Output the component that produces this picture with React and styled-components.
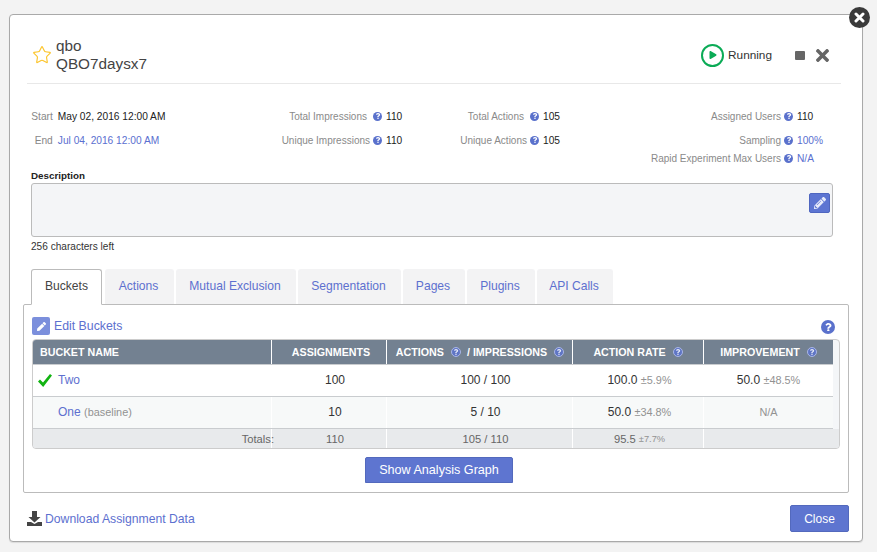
import styled, { createGlobalStyle } from "styled-components";
import { FaPen, FaPencilAlt, FaPlay, FaQuestion, FaTimes } from "react-icons/fa";
import { Star } from "lucide-react";

const GlobalStyle = createGlobalStyle`
  html, body {
    margin: 0;
    height: 552px;
    overflow: hidden;
    background: #f3f3f3;
    font-family: "Liberation Sans", Arial, sans-serif;
    color: #333;
  }
  * { box-sizing: border-box; }
`;

const Page = styled.div`
  width: 877px;
  height: 552px;
  padding: 14px 0 0 9px;
`;

const Modal = styled.div`
  position: relative;
  width: 854px;
  height: 528px;
  background: #fff;
  border: 1px solid #a9a9a9;
  border-radius: 4px;
  padding: 0 13px;
  box-shadow: 0 1px 1px rgba(0, 0, 0, 0.1);
`;

const Dismiss = styled.button`
  position: absolute;
  top: -8px;
  right: -8px;
  width: 21px;
  height: 21px;
  padding: 0;
  border: 0;
  border-radius: 50%;
  background: #3a3a3a;
  display: flex;
  align-items: center;
  justify-content: center;
`;

const Header = styled.div`
  display: flex;
  align-items: center;
  justify-content: space-between;
  height: 69px;
  margin: 0 8px 0 4px;
  padding: 12px 9px 0 5px;
  border-bottom: 1px solid #e8e8e8;
`;

const TitleGroup = styled.div`
  display: flex;
  align-items: center;
  gap: 4px;
  color: #fcc52d;
`;

const Title = styled.div`
  color: #444;
  font-size: 15.3px;
  line-height: 18px;
`;

const Controls = styled.div`
  display: flex;
  align-items: center;
  color: #666;
`;

const PlayRing = styled.span`
  width: 23px;
  height: 23px;
  border: 2px solid #0bab56;
  border-radius: 50%;
  color: #0bab56;
  font-size: 8px;
  display: flex;
  align-items: center;
  justify-content: center;
  padding-left: 1px;
  margin-right: 4px;
`;

const Status = styled.span`
  color: #333;
  font-size: 11.8px;
  margin-right: 23px;
`;

const StopButton = styled.span`
  width: 10px;
  height: 9px;
  background: #666;
  border-radius: 1px;
  margin-right: 8px;
`;

const Meta = styled.div`
  display: grid;
  grid-template-columns: 144px 253px 157px 247px;
  grid-template-rows: 24px 18px 18px;
  margin-top: 20px;
  font-size: 10.2px;
`;

const MetaCell = styled.div`
  display: flex;
  align-items: center;
  justify-content: flex-end;
  height: 24px;
  grid-column: ${(p) => p.$col};
  grid-row: ${(p) => p.$row};
`;

const DateCell = styled(MetaCell)`
  justify-content: flex-start;
`;

const DateLabel = styled.span`
  color: #888;
  width: 30px;
  margin-right: 5px;
  text-align: right;
`;

const MetaLabel = styled.span`
  color: #8a8a8a;
  font-size: 10px;
  margin-right: ${(p) => p.$gap || 3}px;
`;

const MetaValue = styled.span`
  color: ${(p) => (p.$link ? "#5a6fd0" : "#222")};
  width: ${(p) => p.$w || 34}px;
  white-space: nowrap;
  margin-left: ${(p) => (p.$flush ? 0 : 4)}px;
`;

const HelpDot = styled.span`
  width: ${(p) => p.$size || 9}px;
  height: ${(p) => p.$size || 9}px;
  margin-top: ${(p) => (p.$size ? 2 : 0)}px;
  border-radius: 50%;
  background: #5a71cc;
  color: #fff;
  font-size: ${(p) => (p.$size ? p.$size * 0.62 : 6)}px;
  display: inline-flex;
  align-items: center;
  justify-content: center;
  flex: none;
`;

const HelpRing = styled.span`
  width: 10px;
  height: 10px;
  border-radius: 50%;
  border: 1px solid #a9b6e6;
  background: #5f75c4;
  color: #e4e8f7;
  font-size: 6px;
  display: inline-flex;
  align-items: center;
  justify-content: center;
  margin: 0 ${(p) => (p.$mid ? 6 : 0)}px 0 7px;
`;

const Section = styled.div`
  margin: 0 16px 0 8px;
`;

const FieldLabel = styled.div`
  color: #222;
  font-size: 9.8px;
  font-weight: bold;
  line-height: 12px;
  margin-top: 6px;
`;

const DescriptionBox = styled.div`
  position: relative;
  height: 54px;
  margin-top: 1px;
  background: #f4f5f7;
  border: 1px solid #bbb;
  border-radius: 3px;
`;

const EditButton = styled.span`
  position: absolute;
  top: 9px;
  right: 2px;
  width: 21px;
  height: 20px;
  background: #5d75d2;
  border: 1px solid #4f66c0;
  border-radius: 2px;
  color: #e8ecfb;
  font-size: 12px;
  display: flex;
  align-items: center;
  justify-content: center;
`;

const Counter = styled.div`
  font-size: 10.1px;
  line-height: 12px;
  margin-top: 4px;
  color: #333;
`;

const Tabs = styled.div`
  display: flex;
  gap: 2px;
  margin: 16px 0 -1px 8px;
  position: relative;
  z-index: 1;
`;

const Tab = styled.div`
  height: ${(p) => (p.$active ? 36 : 35)}px;
  width: ${(p) => p.$w}px;
  margin-right: ${(p) => (p.$active ? 1 : 0)}px;
  display: flex;
  align-items: center;
  justify-content: center;
  font-size: 12.1px;
  padding: 0 ${(p) => (p.$active ? 0 : 2)}px 3px 0;
  border-radius: 3px 3px 0 0;
  color: ${(p) => (p.$active ? "#444" : "#5d70cf")};
  background: ${(p) => (p.$active ? "#fff" : "#f3f3f4")};
  border: 1px solid ${(p) => (p.$active ? "#bbb" : "#f3f3f4")};
  border-bottom: ${(p) => (p.$active ? "1px solid #fff" : "0")};
`;

const Panel = styled.div`
  width: 826px;
  height: 189px;
  padding: 11px 8px 0;
  background: #fff;
  border: 1px solid #bbb;
  border-radius: 2px;
`;

const PanelBar = styled.div`
  display: flex;
  align-items: center;
  justify-content: space-between;
  height: 20px;
  margin-bottom: 3px;
  padding-right: 5px;
`;

const EditLink = styled.span`
  display: flex;
  align-items: center;
  gap: 4px;
  color: #5d70cf;
  font-size: 12.3px;
`;

const EditIcon = styled.span`
  width: 18px;
  height: 18px;
  border-radius: 2px;
  background: #7b8fdc;
  color: #fff;
  font-size: 9px;
  display: flex;
  align-items: center;
  justify-content: center;
`;

const TableBox = styled.div`
  width: 808px;
  height: 110px;
  background: #f4f6f8;
  border: 1px solid #ccc;
  border-radius: 4px;
  overflow: hidden;
`;

const Row = styled.div`
  display: grid;
  grid-template-columns: 239px 115px 186px 131px 129px;
  height: ${(p) => p.$h}px;
  width: ${(p) => (p.$fill ? "100%" : "800px")};
  background: ${(p) => p.$bg};
  border-bottom: ${(p) => (p.$line ? "1px solid #c9cccf" : "0")};
  font-size: ${(p) => p.$size || 12}px;
  color: ${(p) => p.$color || "#333"};
`;

const Cell = styled.div`
  display: flex;
  align-items: center;
  justify-content: ${(p) => p.$align || "center"};
  border-right: ${(p) => (p.$last ? "0" : "1px solid #fff")};
  white-space: pre;
  padding-left: ${(p) => p.$pad || 0}px;
  padding-bottom: 1px;
`;

const HeadCell = styled(Cell)`
  color: #fff;
  font-size: 10.7px;
  font-weight: bold;
`;

const BucketLink = styled.span`
  color: #5d70cf;
  font-size: 12px;
`;

const Muted = styled.span`
  color: #929292;
  font-size: ${(p) => p.$size || 10.9}px;
`;

const TotalsLabel = styled.span`
  margin-right: -3px;
`;

const Check = styled.svg`
  width: 14px;
  height: 13px;
  margin-right: 6px;
  fill: #12b312;
`;

const ButtonRow = styled.div`
  display: flex;
  justify-content: center;
  margin: 8px 0 0 6px;
`;

const Primary = styled.button`
  height: ${(p) => p.$h}px;
  width: ${(p) => p.$w}px;
  padding: 0;
  background: #5e75d0;
  border: 1px solid #5369bd;
  border-radius: ${(p) => (p.$flat ? "2px 2px 0 0" : "2px")};
  color: #fff;
  font-family: inherit;
  font-size: ${(p) => p.$size || 12}px;
`;

const Footer = styled.div`
  display: flex;
  align-items: center;
  justify-content: space-between;
  margin: 12px 0 0 4px;
`;

const DownloadLink = styled.span`
  display: flex;
  align-items: center;
  gap: 3px;
  color: #5d70cf;
  font-size: 12.2px;
`;

const helpIcon = (
  <HelpDot>
    <FaQuestion />
  </HelpDot>
);

const ring = (
  <HelpRing>
    <FaQuestion />
  </HelpRing>
);

function App() {
  return (
    <Page>
      <GlobalStyle />
      <Modal>
        <Dismiss>
          <svg width="11" height="11" viewBox="0 0 11 11">
            <path d="M2 2l7 7M9 2l-7 7" stroke="#fff" strokeWidth="3" strokeLinecap="round" />
          </svg>
        </Dismiss>
        <Header>
          <TitleGroup>
            <Star size={20} strokeWidth={1.4} />
            <Title>
              qbo
              <br />
              QBO7daysx7
            </Title>
          </TitleGroup>
          <Controls>
            <PlayRing>
              <FaPlay />
            </PlayRing>
            <Status>Running</Status>
            <StopButton />
            <FaTimes size={19} />
          </Controls>
        </Header>
        <Meta>
          <DateCell $col={1} $row={1}>
            <DateLabel>Start</DateLabel>
            <MetaValue $w={110} $flush>May 02, 2016 12:00 AM</MetaValue>
          </DateCell>
          <DateCell $col={1} $row={2}>
            <DateLabel>End</DateLabel>
            <MetaValue $w={110} $flush $link>Jul 04, 2016 12:00 AM</MetaValue>
          </DateCell>
          <MetaCell $col={2} $row={1}>
            <MetaLabel $gap={6}>Total Impressions</MetaLabel>
            {helpIcon}
            <MetaValue>110</MetaValue>
          </MetaCell>
          <MetaCell $col={2} $row={2}>
            <MetaLabel>Unique Impressions</MetaLabel>
            {helpIcon}
            <MetaValue>110</MetaValue>
          </MetaCell>
          <MetaCell $col={3} $row={1}>
            <MetaLabel $gap={6}>Total Actions</MetaLabel>
            {helpIcon}
            <MetaValue>105</MetaValue>
          </MetaCell>
          <MetaCell $col={3} $row={2}>
            <MetaLabel>Unique Actions</MetaLabel>
            {helpIcon}
            <MetaValue>105</MetaValue>
          </MetaCell>
          <MetaCell $col={4} $row={1}>
            <MetaLabel>Assigned Users</MetaLabel>
            {helpIcon}
            <MetaValue $w={27}>110</MetaValue>
          </MetaCell>
          <MetaCell $col={4} $row={2}>
            <MetaLabel>Sampling</MetaLabel>
            {helpIcon}
            <MetaValue $w={27} $link>100%</MetaValue>
          </MetaCell>
          <MetaCell $col={4} $row={3}>
            <MetaLabel>Rapid Experiment Max Users</MetaLabel>
            {helpIcon}
            <MetaValue $w={27} $link>N/A</MetaValue>
          </MetaCell>
        </Meta>
        <Section>
          <FieldLabel>Description</FieldLabel>
          <DescriptionBox>
            <EditButton>
              <FaPencilAlt />
            </EditButton>
          </DescriptionBox>
          <Counter>256 characters left</Counter>
        </Section>
        <Tabs>
          <Tab $active $w={71}>Buckets</Tab>
          <Tab $w={69}>Actions</Tab>
          <Tab $w={120}>Mutual Exclusion</Tab>
          <Tab $w={103}>Segmentation</Tab>
          <Tab $w={62}>Pages</Tab>
          <Tab $w={68}>Plugins</Tab>
          <Tab $w={76}>API Calls</Tab>
        </Tabs>
        <Panel>
          <PanelBar>
            <EditLink>
              <EditIcon>
                <FaPen />
              </EditIcon>
              Edit Buckets
            </EditLink>
            <HelpDot $size={14}>
              <FaQuestion />
            </HelpDot>
          </PanelBar>
          <TableBox>
            <Row $h={25} $bg="#738191" $line>
              <HeadCell $align="flex-start" $pad={7}>BUCKET NAME</HeadCell>
              <HeadCell $pad={4}>ASSIGNMENTS</HeadCell>
              <HeadCell $pad={1}>
                ACTIONS
                <HelpRing $mid>
                  <FaQuestion />
                </HelpRing>
                / IMPRESSIONS{ring}
              </HeadCell>
              <HeadCell>ACTION RATE{ring}</HeadCell>
              <HeadCell $last>IMPROVEMENT{ring}</HeadCell>
            </Row>
            <Row $h={32} $bg="#fff" $line>
              <Cell $align="flex-start" $pad={5}>
                <Check viewBox="0 0 14 13">
                  <path d="M0 7.500L2 5.500 5 8.500 12 0 14 1.500 5.200 13z" />
                </Check>
                <BucketLink>Two</BucketLink>
              </Cell>
              <Cell $pad={12}>100</Cell>
              <Cell $pad={12}>100 / 100</Cell>
              <Cell $pad={3}>100.0 <Muted>±5.9%</Muted></Cell>
              <Cell $last>50.0 <Muted>±48.5%</Muted></Cell>
            </Row>
            <Row $h={32} $bg="#f7f9f9" $line>
              <Cell $align="flex-start" $pad={25}>
                <BucketLink>One</BucketLink>&nbsp;<Muted>(baseline)</Muted>
              </Cell>
              <Cell $pad={12}>10</Cell>
              <Cell $pad={12}>5 / 10</Cell>
              <Cell $pad={3}>50.0 <Muted>±34.8%</Muted></Cell>
              <Cell $last><Muted>N/A</Muted></Cell>
            </Row>
            <Row $h={20} $bg="#e8eaec" $fill $size={11.2} $color="#666">
              <Cell $align="flex-end"><TotalsLabel>Totals:</TotalsLabel></Cell>
              <Cell $pad={12}>110</Cell>
              <Cell $pad={12}>105 / 110</Cell>
              <Cell $pad={3}>95.5 <Muted $size={9.3}>±7.7%</Muted></Cell>
              <Cell $last />
            </Row>
          </TableBox>
          <ButtonRow>
            <Primary $w={148} $h={26} $size={12.6} $flat>Show Analysis Graph</Primary>
          </ButtonRow>
        </Panel>
        <Footer>
          <DownloadLink>
            <svg width="15" height="15" viewBox="0 0 15 15" fill="#444">
              <path d="M5 0h5v6h3.500L7.500 11.500 1.500 6H5z" />
              <path d="M0 11h4l3.500 2 3.500-2H15v4H0z" />
            </svg>
            Download Assignment Data
          </DownloadLink>
          <Primary $w={59} $h={27}>Close</Primary>
        </Footer>
      </Modal>
    </Page>
  );
}

export default App;
